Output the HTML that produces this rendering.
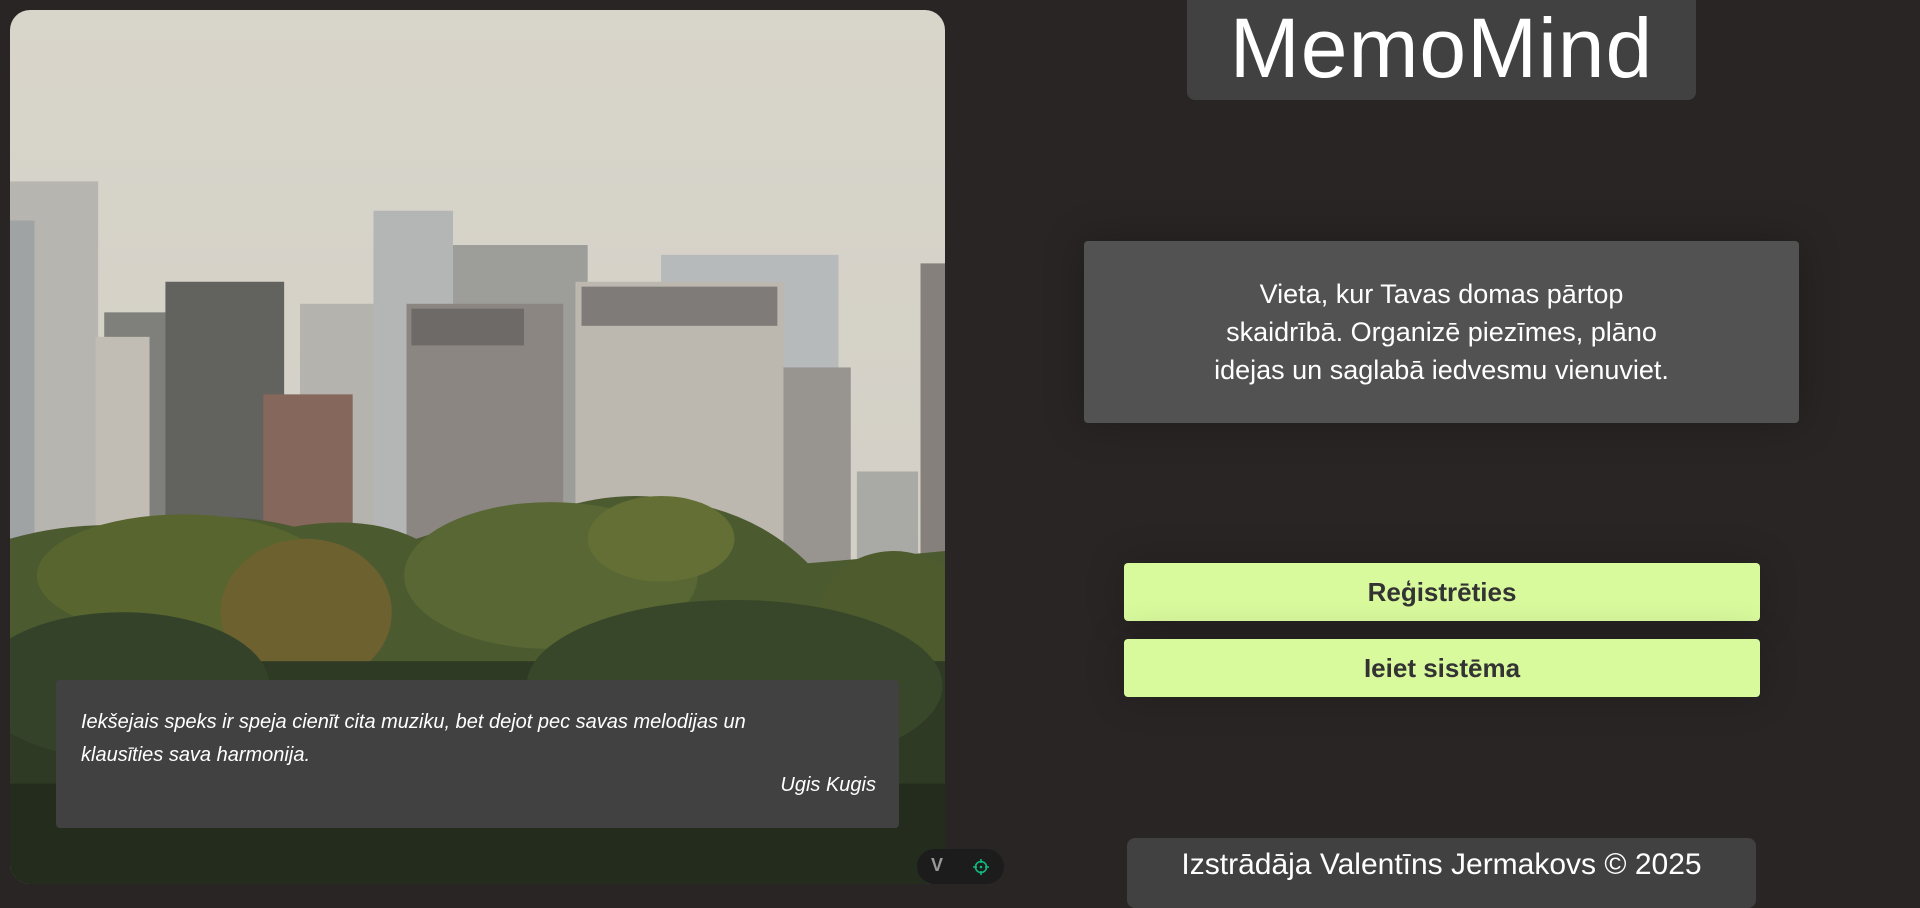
<!DOCTYPE html>
<html><head><meta charset="utf-8"><style>
html,body{margin:0;padding:0;width:1920px;height:895px;overflow:hidden;background:#292524;font-family:"Liberation Sans",sans-serif;}
.abs{position:absolute;box-sizing:border-box;}
#img{left:10px;top:10px;width:935px;height:874px;border-radius:20px;overflow:hidden;}
#quote{left:56px;top:680px;width:843px;height:148px;background:#414141;border-radius:4px;color:#fff;font-style:italic;font-size:20px;}
#title{left:1187px;top:-10px;width:509px;height:110px;background:#414141;border-radius:8px;color:#fff;font-size:84px;text-align:center;line-height:108px;padding-top:4px;letter-spacing:1px;}
#desc{left:1084px;top:241px;width:715px;height:182px;background:#525252;border-radius:4px;color:#fff;font-size:27px;line-height:38px;text-align:center;padding-top:34px;white-space:nowrap;box-shadow:0 0 40px rgba(0,0,0,.25);}
.btn{left:1124px;width:636px;height:58px;background:#d9f99d;border-radius:4px;color:#333;font-weight:bold;font-size:26px;text-align:center;line-height:58px;box-shadow:0 0 40px rgba(0,0,0,.2);}
#foot{left:1127px;top:838px;width:629px;height:70px;background:#414141;border-radius:8px;color:#fff;font-size:30px;text-align:center;line-height:54px;}
#wid{left:917px;top:849px;width:87px;height:35px;background:#1c1c1c;border-radius:18px;}
</style></head><body>
<div class="abs" id="img">
<svg width="935" height="874" viewBox="8 8 764 714" preserveAspectRatio="none">
<defs><linearGradient id="sky" x1="0" y1="0" x2="0" y2="1"><stop offset="0" stop-color="#d8d5cb"/><stop offset="1" stop-color="#d0ccc3"/></linearGradient></defs>
<rect x="8" y="8" width="764" height="714" fill="url(#sky)"/>
<rect x="540" y="208" width="145" height="260" fill="#b7babb"/>
<rect x="305" y="172" width="65" height="300" fill="#b3b6b5"/>
<rect x="370" y="200" width="110" height="270" fill="#9d9d99"/>
<rect x="245" y="248" width="60" height="200" fill="#b5b3ad"/>
<rect x="8" y="148" width="72" height="300" fill="#b7b5af"/>
<rect x="8" y="180" width="20" height="270" fill="#9fa3a3"/>
<rect x="85" y="255" width="60" height="200" fill="#7f7f7b"/>
<rect x="135" y="230" width="97" height="220" fill="#62625f"/>
<rect x="78" y="275" width="44" height="180" fill="#c1bdb5"/>
<rect x="215" y="322" width="73" height="130" fill="#86675b"/>
<rect x="332" y="248" width="128" height="220" fill="#8b8682"/>
<rect x="336" y="252" width="92" height="30" fill="#6e6a67"/>
<rect x="470" y="230" width="170" height="240" fill="#bcb7af"/>
<rect x="475" y="234" width="160" height="32" fill="#7e7b78"/>
<rect x="640" y="300" width="55" height="170" fill="#98948f"/>
<rect x="700" y="385" width="50" height="80" fill="#a9a9a5"/>
<rect x="752" y="215" width="20" height="250" fill="#85807b"/>
<path d="M8 440 Q60 425 120 430 Q180 415 240 430 Q300 420 340 440 Q400 420 430 425 Q500 395 560 410 Q620 420 660 460 Q720 455 772 450 L772 722 L8 722Z" fill="#4c5a30"/>
<ellipse cx="150" cy="470" rx="120" ry="50" fill="#59652f"/>
<ellipse cx="250" cy="500" rx="70" ry="60" fill="#6d6130"/>
<ellipse cx="450" cy="470" rx="120" ry="60" fill="#586733"/>
<ellipse cx="540" cy="440" rx="60" ry="35" fill="#636f35"/>
<ellipse cx="730" cy="500" rx="60" ry="50" fill="#4e5b2c"/>
<rect x="8" y="540" width="764" height="182" fill="#2f3a24"/>
<ellipse cx="100" cy="560" rx="120" ry="60" fill="#34422a"/>
<ellipse cx="600" cy="560" rx="170" ry="70" fill="#38462a"/>
<rect x="8" y="640" width="764" height="82" fill="#232c1d"/>
</svg>
</div>
<div class="abs" id="quote">
<div style="position:absolute;left:25px;top:26px;width:720px;line-height:33px;">Iekšejais speks ir speja cienīt cita muziku, bet dejot pec savas melodijas un klausīties sava harmonija.</div>
<div style="position:absolute;right:23px;top:94px;">Ugis Kugis</div>
</div>
<div class="abs" id="wid">
<span style="position:absolute;left:14px;top:6px;color:#999;font-weight:bold;font-size:18px;">V</span>
<svg style="position:absolute;left:55px;top:9px" width="18" height="18" viewBox="0 0 18 18"><circle cx="9" cy="9" r="5.5" fill="none" stroke="#10b981" stroke-width="1.6"/><circle cx="9" cy="9" r="1.3" fill="#10b981"/><path d="M9 1v4M9 13v4M1 9h4M13 9h4" stroke="#10b981" stroke-width="1.6"/></svg>
</div>
<div class="abs" id="title">MemoMind</div>
<div class="abs" id="desc">Vieta, kur Tavas domas pārtop<br>skaidrībā. Organizē piezīmes, plāno<br>idejas un saglabā iedvesmu vienuviet.</div>
<div class="abs btn" style="top:563px">Reģistrēties</div>
<div class="abs btn" style="top:639px">Ieiet sistēma</div>
<div class="abs" id="foot">Izstrādāja Valentīns Jermakovs © 2025</div>
</body></html>
